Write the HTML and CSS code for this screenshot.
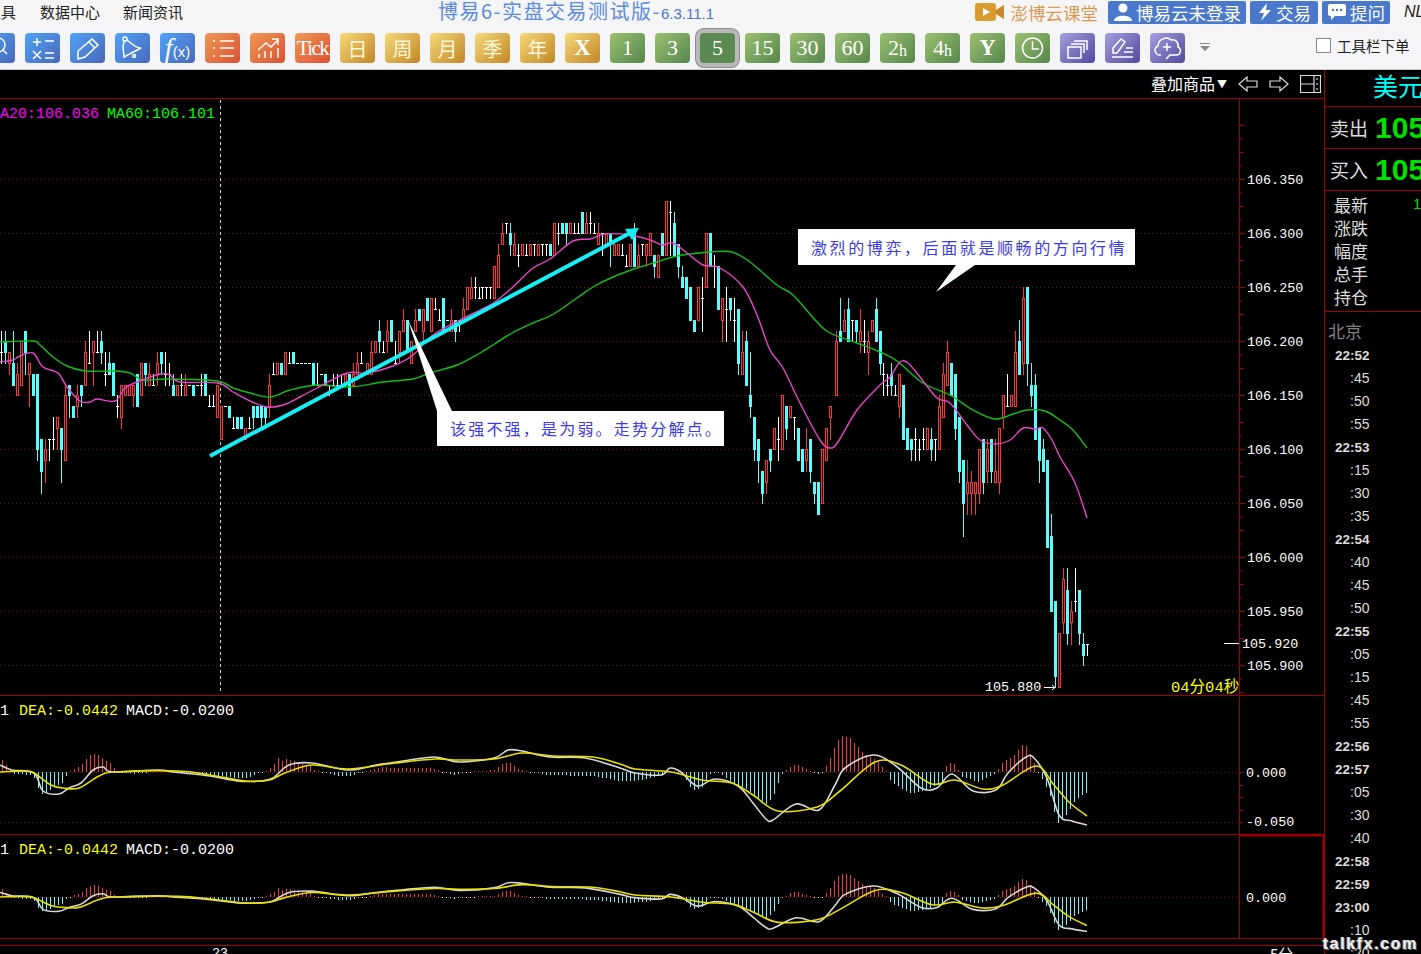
FILE: index.html
```html
<!DOCTYPE html>
<html lang="zh-CN">
<head>
    <meta charset="UTF-8">
    <title>博易6-实盘交易测试版</title>
    <link rel="stylesheet" href="styles.css">
</head>
<body>

<header class="topbar">
    <nav class="menu">
        <span class="menu-cut">工具</span>
        <span>数据中心</span>
        <span>新闻资讯</span>
    </nav>
    <div class="title">博易6-实盘交易测试版-<small>6.3.11.1</small></div>
    <div class="top-right">
        <svg class="video-icon" width="30" height="18" viewBox="0 0 30 18">
            <rect x="0" y="0" width="21" height="18" rx="3" fill="#d99a2e"/>
            <path d="M8 5 L15 9 L8 13 Z" fill="#fff"/>
            <path d="M21 7 L29 2 V16 L21 11 Z" fill="#c9882a"/>
        </svg>
        <span class="course">澎博云课堂</span>
        <a class="top-btn login">
            <svg width="20" height="20" viewBox="0 0 20 20"><circle cx="10" cy="6" r="4.5" fill="#fff"/><path d="M1 19 C1 12 19 12 19 19 Z" fill="#fff"/></svg>
            博易云未登录
        </a>
        <a class="top-btn">
            <svg width="16" height="20" viewBox="0 0 16 20"><path d="M10 1 L2 11 H7 L4 19 L14 8 H9 Z" fill="#fff"/></svg>
            交易
        </a>
        <a class="top-btn">
            <svg width="20" height="20" viewBox="0 0 20 20"><path d="M3 2 H17 Q19 2 19 4 V12 Q19 14 17 14 H8 L4 18 V14 H3 Q1 14 1 12 V4 Q1 2 3 2 Z" fill="#fff"/><circle cx="6" cy="8" r="1.2" fill="#4a79cc"/><circle cx="10" cy="8" r="1.2" fill="#4a79cc"/><circle cx="14" cy="8" r="1.2" fill="#4a79cc"/></svg>
            提问
        </a>
        <span class="nl">NL</span>
    </div>
</header>

<div class="toolbar">
    <div class="tools">
        <a class="tool blue"><svg viewBox="0 0 35 30"><circle cx="18" cy="12" r="7"/><path d="M23 17 L27 21"/></svg></a>
        <a class="tool blue"><svg viewBox="0 0 35 30"><path d="M12 5 V13 M8 9 H16 M20 8 H29 M8 18 L16 26 M16 18 L8 26 M20 20 H29 M20 25 H29"/></svg></a>
        <a class="tool blue"><svg viewBox="0 0 35 30"><path d="M8 26 L8 18 L22 6 L28 12 L15 24 Z M19 9 L25 15"/></svg></a>
        <a class="tool blue"><svg viewBox="0 0 35 30"><circle cx="10" cy="6" r="2"/><path d="M10 8 C6 12 9 18 9 24 L26 15 C20 15 16 10 12 7"/><circle cx="19" cy="23" r="1.5"/></svg></a>
        <a class="tool blue"><span class="fx">f<i>(x)</i></span></a>
        <a class="tool orange"><svg viewBox="0 0 35 30"><path d="M8 8 H10 M15 8 H29 M8 15 H10 M15 15 H29 M8 23 H10 M15 23 H29"/></svg></a>
        <a class="tool orange"><svg viewBox="0 0 35 30"><path d="M8 17 L16 10 L21 14 L28 7 M22 6 H28 V12 M9 21 V25 M15 18 V25 M21 18 V25 M28 15 V25"/></svg></a>
        <a class="tool orange tick">Tick</a>
        <a class="tool gold">日</a>
        <a class="tool gold">周</a>
        <a class="tool gold">月</a>
        <a class="tool gold">季</a>
        <a class="tool gold">年</a>
        <a class="tool gold bold">X</a>
        <a class="tool green">1</a>
        <a class="tool green">3</a>
        <a class="tool green active">5</a>
        <a class="tool green">15</a>
        <a class="tool green">30</a>
        <a class="tool green">60</a>
        <a class="tool green">2<small>h</small></a>
        <a class="tool green">4<small>h</small></a>
        <a class="tool green bold">Y</a>
        <a class="tool green"><svg viewBox="0 0 35 30"><circle cx="17.5" cy="15" r="10"/><path d="M17.5 8 V16 H24"/></svg></a>
        <a class="tool purple"><svg viewBox="0 0 35 30"><rect x="8" y="14" width="13" height="11"/><path d="M11 11 H24 V20 M14 8 H27 V17"/></svg></a>
        <a class="tool purple"><svg viewBox="0 0 35 30"><path d="M8 20 L8 15 L16 6 L20 9 L12 20 Z M7 24 H28 M19 19 H28 M21 15 H28"/></svg></a>
        <a class="tool purple"><svg viewBox="0 0 35 30"><path d="M11 22 C5 23 3 15 8 13 C8 6 17 3 21 7 C26 6 29 10 28 14 C32 16 31 23 25 22 H20 L16 26 M17 10 V18 M13 14 H21"/></svg></a>
    </div>
    <svg class="more" width="10" height="8" viewBox="0 0 10 8"><path d="M0 0 H10 V1 H0 Z M0 3 H10 L5 8 Z" fill="#888"/></svg>
    <label class="order-check"><span class="box"></span>工具栏下单</label>
</div>

<div class="workspace">
    <main class="chart-col">
        <div class="chart-head">
            <span class="overlay">叠加商品<small>▼</small></span>
            <svg width="20" height="18" viewBox="0 0 20 18"><path d="M1 9 L9 2 V6 H19 V12 H9 V16 Z" class="head-icon"/></svg>
            <svg width="20" height="18" viewBox="0 0 20 18"><path d="M19 9 L11 2 V6 H1 V12 H11 V16 Z" class="head-icon"/></svg>
            <svg width="21" height="18" viewBox="0 0 21 18"><path d="M.5 .5 H20.5 V17.5 H.5 Z M.5 9 H14 M14 .5 V17.5" class="head-icon"/><path d="M17 3 V5 M17 8 V10 M17 13 V15" class="head-icon"/></svg>
        </div>

        <svg class="chart" viewBox="0 99 1324 855" width="1324" height="855">
            <g id="grid"></g>
            <path class="dash-line" d="M220.5 100 V694"/>
            <g id="candles" shape-rendering="crispEdges"></g>
            <path id="ma60" class="ma ma60"/>
            <path id="ma20" class="ma ma20"/>
            <g id="macd1"></g>
            <g id="macd2"></g>

            <text class="legend magenta" x="-9" y="118">MA20:106.036</text>
            <text class="legend lime" x="107" y="118">MA60:106.101</text>
            <text class="legend white" x="-9" y="715">.1</text>
            <text class="legend yellow" x="19" y="715">DEA:-0.0442</text>
            <text class="legend white" x="126" y="715">MACD:-0.0200</text>
            <text class="legend white" x="-9" y="854">.1</text>
            <text class="legend yellow" x="19" y="854">DEA:-0.0442</text>
            <text class="legend white" x="126" y="854">MACD:-0.0200</text>

            <g class="axis-text">
                <text x="1247" y="184">106.350</text>
                <text x="1247" y="238">106.300</text>
                <text x="1247" y="292">106.250</text>
                <text x="1247" y="346">106.200</text>
                <text x="1247" y="400">106.150</text>
                <text x="1247" y="454">106.100</text>
                <text x="1247" y="508">106.050</text>
                <text x="1247" y="562">106.000</text>
                <text x="1247" y="616">105.950</text>
                <text x="1247" y="670">105.900</text>
                <text x="1242" y="648">105.920</text>
                <text x="985" y="691">105.880</text>
                <text x="1246" y="777">0.000</text>
                <text x="1246" y="826">-0.050</text>
                <text x="1246" y="902">0.000</text>
                <text x="212" y="957">23</text>
            </g>
            <path class="white-line" d="M1224 643.5 H1239 M1044 687.5 H1055 M1052 685 L1055 687.5 L1052 690"/>
            <text class="countdown" x="1171" y="692">04分04秒</text>
            <text class="time-end" x="1270" y="960">5分</text>

            <path class="cyan-arrow" d="M210 456 L632 232"/>
            <path class="cyan-head" d="M639 228 L625 229 L632 240 Z"/>

            <path class="note-box" d="M437 411 H437 L408 320 L452 411 H724 V446 H437 Z"/>
            <text class="note-text" x="450" y="435">该强不强，是为弱。走势分解点。</text>
            <path class="note-box" d="M798 229 H1135 V265 H975 L936 292 L956 265 H798 Z"/>
            <text class="note-text wide" x="811" y="254">激烈的博弈，后面就是顺畅的方向行情</text>
        </svg>
    </main>

    <aside class="side">
        <div class="side-name">美元</div>
        <div class="side-price"><span>卖出</span><b>105</b></div>
        <div class="side-price"><span>买入</span><b>105</b></div>
        <ul class="side-stats">
            <li>最新<b>1</b></li>
            <li>涨跌</li>
            <li>幅度</li>
            <li>总手</li>
            <li>持仓</li>
        </ul>
        <div class="side-city">北京</div>
        <ul class="side-times">
            <li class="hour">22:52</li>
            <li>:45</li>
            <li>:50</li>
            <li>:55</li>
            <li class="hour">22:53</li>
            <li>:15</li>
            <li>:30</li>
            <li>:35</li>
            <li class="hour">22:54</li>
            <li>:40</li>
            <li>:45</li>
            <li>:50</li>
            <li class="hour">22:55</li>
            <li>:05</li>
            <li>:15</li>
            <li>:45</li>
            <li>:55</li>
            <li class="hour">22:56</li>
            <li class="hour">22:57</li>
            <li>:05</li>
            <li>:30</li>
            <li>:40</li>
            <li class="hour">22:58</li>
            <li class="hour">22:59</li>
            <li class="hour">23:00</li>
            <li>:10</li>
            <li>:20</li>
        </ul>
    </aside>
    <div class="watermark">talkfx.com</div>
</div>

<script src="chart.js"></script>
</body>
</html>
```

FILE: styles.css
```css
html, body {
    margin: 0;
    padding: 0;
}
body {
    width: 1421px;
    height: 954px;
    overflow: hidden;
    background-color: #000;
    font-family: "Noto Sans CJK SC", "Liberation Sans", sans-serif;
    color: #fff;
}
ul {
    list-style: none;
    margin: 0;
    padding: 0;
}

/* top strip */
.topbar {
    height: 24px;
    display: flex;
    align-items: center;
    background-color: #f5f5f5;
    color: #222;
    overflow: hidden;
}
.menu {
    width: 438px;
    flex: none;
    display: flex;
    gap: 23px;
    font-size: 15px;
    line-height: 24px;
}
.menu-cut {
    margin-left: -14px;
    margin-right: 1px;
}
.title {
    font-size: 20px;
    line-height: 24px;
    letter-spacing: 1.5px;
    color: #5c8be0;
    white-space: nowrap;
}
.title small {
    font-size: 15px;
    letter-spacing: 0;
    color: #4a74d8;
    font-family: "Liberation Sans", sans-serif;
}
.top-right {
    margin-left: auto;
    display: flex;
    align-items: center;
    gap: 4px;
}
.video-icon {
    margin-right: 2px;
}
.course {
    font-size: 17.5px;
    color: #d79a55;
    margin-right: 6px;
    white-space: nowrap;
}
.top-btn {
    width: 68px;
    height: 23px;
    flex: none;
    display: flex;
    align-items: center;
    justify-content: center;
    gap: 3px;
    background-color: #4a79cc;
    border-radius: 2px;
    color: #fff;
    font-size: 17.5px;
    white-space: nowrap;
}
.top-btn.login {
    width: 138px;
}
.nl {
    margin-left: 10px;
    width: 17px;
    overflow: hidden;
    font-family: "Liberation Sans", sans-serif;
    font-style: italic;
    font-size: 16px;
}

/* toolbar */
.toolbar {
    height: 45px;
    display: flex;
    align-items: flex-start;
    background-color: #f5f5f8;
    border-bottom: 1px solid #c8c8c8;
    overflow: hidden;
}
.tools {
    margin-left: -20px;
    padding-top: 9px;
    display: flex;
    gap: 10px;
}
.tool {
    width: 35px;
    height: 30px;
    display: flex;
    align-items: center;
    justify-content: center;
    border-radius: 4px;
    color: #fff;
    font-family: "Liberation Serif", "Noto Sans CJK SC", serif;
    font-size: 22px;
}
.tool svg {
    width: 35px;
    height: 30px;
    fill: none;
    stroke: #fff;
    stroke-width: 1.5;
}
.tool small {
    font-size: 16px;
    margin-top: 5px;
}
.tool.bold {
    font-weight: bold;
    font-size: 23px;
}
.tool.tick {
    font-size: 21px;
    letter-spacing: -1.5px;
}
.blue {
    background: linear-gradient(135deg, #4fa3f5, #4a68bc);
}
.orange {
    background: linear-gradient(135deg, #ee9a55, #dd4f33);
}
.gold {
    background: linear-gradient(135deg, #f6da78, #c28626);
}
.gold:not(.bold) {
    font-family: "Noto Sans CJK SC", sans-serif;
    font-size: 20px;
    color: #fff6dc;
}
.green {
    background: linear-gradient(135deg, #9cc070, #54874c);
}
.purple {
    background: linear-gradient(135deg, #a69ede, #524a9e);
}
.tool.active {
    background: #5a8a52;
    box-shadow: 0 0 0 4px #b8b8b8, 0 0 0 5px #8c8c8c;
}
.fx {
    font-size: 28px;
    font-style: italic;
}
.fx i {
    font-size: 15px;
    font-style: normal;
    font-family: "Liberation Sans", sans-serif;
}
.more {
    margin: 19px 0 0 15px;
}
.order-check {
    margin: 11px 0 0 106px;
    display: flex;
    align-items: center;
    gap: 6px;
    font-size: 14.5px;
    color: #222;
    white-space: nowrap;
}
.box {
    width: 13px;
    height: 13px;
    border: 1px solid #888;
    background-color: #fff;
}

/* main area */
.workspace {
    position: relative;
    height: 884px;
    display: flex;
    overflow: hidden;
}
.chart-col {
    width: 1324px;
    flex: none;
    border-right: 1px solid #a00000;
}
.chart-head {
    height: 28px;
    display: flex;
    align-items: center;
    justify-content: flex-end;
    gap: 11px;
    padding-right: 3px;
    border-bottom: 1px solid #a00000;
}
.overlay {
    font-size: 16px;
    line-height: 26px;
    margin-bottom: 2px;
    white-space: nowrap;
}
.overlay small {
    font-size: 10px;
    margin-left: 2px;
    vertical-align: 2px;
}
.head-icon {
    fill: none;
    stroke: #ddd;
    stroke-width: 1.2;
}
.chart {
    display: block;
    background-color: #000;
}
.chart text {
    white-space: pre;
}
.legend {
    font-family: "Liberation Mono", monospace;
    font-size: 15px;
}
.magenta {
    fill: #ff00ff;
}
.lime {
    fill: #00ff00;
}
.white {
    fill: #fff;
}
.yellow {
    fill: #ffff00;
}
.axis-text text {
    font-family: "Liberation Mono", monospace;
    font-size: 13.4px;
    fill: #fff;
}
.countdown {
    font-family: "Liberation Mono", "Noto Sans CJK SC", monospace;
    font-size: 15.5px;
    fill: #ffff00;
}
.time-end {
    font-size: 15px;
    fill: #fff;
}
.dash-line {
    stroke: #d0d0d0;
    stroke-width: 1;
    stroke-dasharray: 3 3;
}
.white-line {
    stroke: #fff;
    stroke-width: 1;
    fill: none;
}
.ma {
    fill: none;
    stroke-width: 1.4;
}
.ma20 {
    stroke: #ea44c8;
}
.ma60 {
    stroke: #10c010;
}
.cyan-arrow {
    stroke: #14f0f5;
    stroke-width: 4;
}
.cyan-head {
    fill: #14f0f5;
}
.note-box {
    fill: #fff;
}
.note-text {
    font-size: 16px;
    letter-spacing: 2.2px;
    fill: #3a3af0;
}
.note-text.wide {
    letter-spacing: 2.6px;
}

/* right panel */
.side {
    flex: 1;
    overflow: hidden;
    min-width: 0;
}
.side-name {
    height: 36px;
    padding-left: 48px;
    font-size: 25px;
    line-height: 30px;
    color: #00ffff;
    white-space: nowrap;
    border-bottom: 1px solid #a00000;
}
.side-price {
    height: 41px;
    display: flex;
    align-items: center;
    gap: 7px;
    padding-left: 5px;
    border-bottom: 1px solid #a00000;
    font-size: 19px;
    color: #ddd;
    white-space: nowrap;
}
.side-price b {
    font-family: "Liberation Sans", sans-serif;
    font-size: 30px;
    color: #00e000;
    margin-top: 1px;
}
.side-stats {
    height: 121px;
    padding-top: 2px;
    box-sizing: border-box;
    border-bottom: 1px solid #a00000;
}
.side-stats li {
    height: 23px;
    padding-left: 9px;
    display: flex;
    justify-content: space-between;
    font-size: 17px;
    line-height: 23px;
    color: #ddd;
}
.side-stats b {
    font-family: "Liberation Sans", sans-serif;
    font-weight: normal;
    font-size: 14px;
    color: #00e000;
}
.side-city {
    height: 32px;
    padding-left: 3px;
    font-size: 17px;
    line-height: 38px;
    color: #808080;
}
.side-times {
    font-family: "Liberation Sans", sans-serif;
    font-size: 14px;
    line-height: 23px;
    color: #ddd;
    padding-left: 25px;
}
.side-times li.hour {
    margin-left: -15px;
    font-weight: bold;
    font-size: 13.5px;
}
.watermark {
    position: absolute;
    right: 3px;
    bottom: 0;
    font-family: "Liberation Sans", sans-serif;
    font-weight: bold;
    font-size: 16px;
    line-height: 20px;
    letter-spacing: 1.6px;
    color: #eee;
    text-shadow: 1px 1px 0 #777, -1px 0 0 #777;
}
```

FILE: chart.js
```js
// grid, candles, moving averages and MACD panels of the chart
var RED = "#ff3333", CYAN = "#55ffff", WHITE = "#ffffff", AXIS = "#a00000";

function levelY(l) {
    return Math.round(179.3 + 10.8 * l);
}

// one string per run of bars: x of first bar, then "type hi,top,bottom,low"
// levels are steps of 0.01 below 106.35; w = doji as "w hi,tick,low"
var runs = [
    [1.33, "w14,16,17 c14,15,16,17 r16,16,17,18 c14,17,19,19 r17,18,20,20 r15,15,19,19 c14,14,16,18 r17,17,18,21 c18,18,20,20 c18,18,25,26 c24,24,27,29 r24,25,26,28 w24,24,26 w22,24,25 r22,22,23,25 c23,23,25,28 r19,20,26,26 c19,19,20,22 c21,21,22,22 r19,20,21,22 c19,19,20,21 r15,16,19,19 w14,17,17 r15,15,16,19 w14,16,16 c14,15,16,17 w16,18,19 c16,17,18,18 c17,17,20,20 w20,21,22 r19,19,22,23 r19,19,20,20 r19,19,20,20 r19,19,20,21 c18,18,21,21 r17,17,20,20 c17,17,18,19 r17,18,19,19 w18,19,19 r16,17,18,19 c16,16,17,18 w16,18,19 w17,18,19 c18,19,20,20 r19,19,20,20 w18,19,20 r18,19,20,20 w19,19,19 c19,19,20,20 w19,19,19 w18,19,20 c18,18,20,20 w20,21,21 w20,21,21 r19,19,22,22 r21,21,24,24 w21,21,21 c21,21,22,22 w22,23,23 c22,22,23,23 c22,22,23,23 r23,23,24,24 w22,23,23 c21,21,22,23 c21,21,22,22 c21,21,22,23 c21,21,22,23 r18,19,21,22 w17,18,18 r17,17,18,18 c17,17,18,18 r16,16,18,18 w16,17,17 c16,16,17,17 w17,17,17 w17,17,17 w17,17,17 w17,17,17 c17,17,19,19 w17,19,19 w18,18,18 c18,18,19,19 w19,19,20 w18,19,19 w18,19,19 w18,19,19 r18,18,19,19 c18,18,20,20 r17,18,19,19 r16,17,18,18 w16,17,17"],
    [366.67, "r17,17,18,18 r15,16,18,18 r15,15,16,16 c13,14,15,16 w15,16,16 r13,14,15,16 c13,13,15,15 w15,17,17 r14,14,16,17 r12,13,14,14 c13,13,16,16 r15,15,17,17 r12,13,14,14 c12,12,13,13 r12,12,14,15 c11,11,13,13 r11,11,14,14 w11,12,12 w12,13,13 c11,11,14,14 w13,13,13 r12,13,14,14 c13,13,14,15 w13,13,14 r11,12,13,13 r10,10,12,12 r9,10,11,11 w9,10,11 w10,11,11"],
    [482.33, "w10,10,11 w10,10,11 w10,10,11 r8,8,11,11 r6,7,10,10 r4,5,6,6 w4,4,5 c4,5,6,7 r5,6,7,7 w6,7,8 r6,6,7,7 w6,7,7 r6,6,7,7 w6,6,7 r6,6,7,7 w6,6,7 w6,6,7 c6,6,7,7 r4,4,7,7 w4,5,6 c4,4,5,5 c4,4,5,6 r4,4,5,5 w4,5,5 w4,5,5 c3,3,5,5 r3,4,5,5 w3,4,5 w4,5,5 r4,5,6,6 w5,5,7 r5,5,6,6 c5,5,6,8 r6,6,7,7 r6,6,7,7 w6,7,7 w7,8,8 r6,6,8,8 c4,5,8,8 r6,7,8,8 w6,6,7 r6,6,7,8 r5,5,7,7 c7,7,8,9 r7,7,9,9 c5,5,7,7 r2,2,7,7 w2,3,7 c3,4,7,7 c6,6,8,9 c8,9,10,10 c9,9,11,11 c10,10,13,13 c13,13,14,14 r10,10,13,13 w9,11,14 r5,5,10,10 c5,5,8,8 w7,8,10 c8,8,12,12 r11,11,13,15 w10,12,15 c11,11,12,13 w11,13,15 c12,12,17,18 r14,16,18,18 c14,15,19,19 c16,20,21,22 c22,22,25,26 c24,24,26,28 c27,27,29,30 r26,26,28,29 c25,25,26,27 r23,23,25,25 w22,24,26 r20,20,25,25 c21,21,23,24 r21,21,22,22 w22,22,24 c23,23,26,26 c25,25,27,27 r23,25,26,27 c24,24,27,28 c28,28,29,30 c28,28,31,31 r25,25,30,30 r23,23,26,26 r21,21,22,24"],
    [835.67, "r14,15,20,20 c11,14,15,15 r12,13,14,14 c11,12,15,15 w13,13,15 c13,13,14,15 r12,14,15,16 w13,15,16 r14,15,16,18 r13,13,14,14 c11,12,15,15 c14,14,17,18"],
    [883.33, "w17,18,20 w18,19,20 c17,18,19,20 w19,20,20 r18,18,21,22 c19,19,24,24 c23,23,25,25 c24,24,25,26 w23,24,26 w24,25,26 w23,24,25 r23,23,25,25 c23,24,25,26 w24,24,26 r20,21,25,25 r17,18,22,22 r15,16,19,19 c17,17,20,20 c18,18,23,24 c22,22,27,28 c26,26,30,33 r26,28,29,31 r27,28,29,31 r28,28,29,31 r25,25,29,30 c24,24,28,29 r24,25,27,28 c24,24,27,28 r24,27,28,28 r23,23,28,29 r20,20,22,23 w18,21,21 r20,20,21,21 r14,16,21,21 c13,15,18,18 r10,11,17,18 c10,10,17,19 c17,19,20,21 c18,19,24,24 c23,23,26,28 c24,25,27,27 c26,26,34,34 c31,33,40,40 c39,39,46,47 r42,42,47,47 r36,37,41,42 c36,38,42,43 r39,40,41,43 w36,39,40 c38,38,42,43 c42,43,44,45 w43,43,44"]
];

function rect(x, y, w, h, color) {
    return '<rect x="' + x + '" y="' + y + '" width="' + w + '" height="' + h + '" fill="' + color + '"/>';
}

function drawCandle(x, s) {
    var type = s[0];
    var v = s.slice(1).split(",").map(function (n) { return levelY(+n); });
    if (type == "w") {
        return rect(x, v[0], 1, v[2] - v[0] + 1, WHITE) + rect(x - 1, v[1], 3, 1, WHITE);
    }
    var color = type == "r" ? RED : CYAN;
    var out = rect(x, v[0], 1, v[3] - v[0] + 1, color);
    if (type == "c") {
        return out + rect(x - 1, v[1], 3, v[2] - v[1] + 1, color);
    }
    out += rect(x - 1, v[1], 3, v[2] - v[1] + 1, RED);
    return out + rect(x, v[1] + 1, 1, Math.max(v[2] - v[1] - 1, 0), "#000");
}

var candleHtml = "";
runs.forEach(function (run) {
    run[1].split(" ").forEach(function (s, i) {
        candleHtml += drawCandle(Math.round(run[0] + i * 4), s);
    });
});
document.getElementById("candles").innerHTML = candleHtml;

// dotted levels and axes
var grid = "";
function dotted(y) {
    grid += '<path d="M0 ' + (y + 0.5) + ' H1239" stroke="#7a1010" stroke-dasharray="1 3"/>';
}
for (var k = 0; k < 10; k++) {
    dotted(179 + 54 * k);
}
dotted(772);
dotted(822);
dotted(897);
function axisLine(d, w) {
    grid += '<path d="' + d + '" stroke="' + AXIS + '" stroke-width="' + (w || 1) + '" fill="none"/>';
}
axisLine("M1239.5 99 V938");
axisLine("M0 695.5 H1324");
axisLine("M0 834.5 H1324");
axisLine("M0 938.5 H1324");
axisLine("M0 945.5 H1324");
axisLine("M1240.5 835.5 H1323.5 V938", 2);
for (var t = 0; t < 44; t++) {
    var ty = 179.5 + 13.5 * (t - 4);
    if (ty > 125 && ty < 694) {
        axisLine("M1239 " + ty + " H" + (t % 4 == 0 ? 1245 : t % 2 ? 1242 : 1244));
    }
}
[772, 822, 785, 797, 810].forEach(function (y) {
    axisLine("M1239 " + (y + 0.5) + " H1243");
});
document.getElementById("grid").innerHTML = grid;

// catmull-rom through the points, the lines are smooth averages
function smoothPath(points) {
    var d = "M" + points[0][0] + " " + points[0][1];
    for (var i = 0; i < points.length - 1; i++) {
        var p0 = points[i - 1] || points[i], p1 = points[i], p2 = points[i + 1], p3 = points[i + 2] || p2;
        d += " C" + (p1[0] + (p2[0] - p0[0]) / 6) + " " + (p1[1] + (p2[1] - p0[1]) / 6) + " " +
            (p2[0] - (p3[0] - p1[0]) / 6) + " " + (p2[1] - (p3[1] - p1[1]) / 6) + " " + p2[0] + " " + p2[1];
    }
    return d;
}

document.getElementById("ma60").setAttribute("d", smoothPath([
    [0,342],[33,341],[40,345],[53,357],[67,366],[85,371],[113,371],[130,373],[143,380],[167,379],[217,381],[233,388],[250,393],[270,397],[290,390],[317,385],[350,387],[383,382],[413,379],[430,373],[457,365],[480,353],[493,345],[512,333],[533,323],[552,315],[577,298],[593,287],[613,277],[637,268],[657,262],[677,256],[710,252],[732,252],[750,262],[777,285],[793,295],[817,322],[830,333],[857,343],[880,352],[897,361],[923,383],[950,395],[973,410],[995,419],[1013,414],[1027,410],[1045,411],[1060,420],[1073,430],[1087,448]
]));
document.getElementById("ma20").setAttribute("d", smoothPath([
    [0,362],[13,360],[20,356],[33,353],[43,367],[58,373],[67,387],[80,401],[90,402],[97,399],[115,401],[125,388],[137,382],[160,374],[170,375],[180,382],[218,383],[233,392],[250,401],[267,407],[283,405],[300,397],[317,388],[347,373],[367,373],[393,366],[413,355],[433,335],[460,320],[480,310],[495,302],[513,287],[533,268],[550,259],[573,241],[590,239],[605,234],[630,235],[650,240],[662,245],[673,243],[687,253],[703,265],[720,268],[743,287],[757,315],[770,350],[783,368],[800,403],[820,440],[830,448],[838,442],[857,410],[880,385],[890,377],[900,362],[908,363],[920,377],[937,398],[950,403],[967,425],[980,440],[995,444],[1010,440],[1023,428],[1035,429],[1043,428],[1052,440],[1060,457],[1075,483],[1087,518]
]));

// MACD key points: x, px above zero on the upper panel
var hist = [[2,12],[8,4],[12,0],[14,-2],[33,-3],[37,-15],[42,-22],[47,-20],[51,-18],[57,-13],[61,-13],[65,-5],[69,0],[77,4],[81,6],[85,12],[89,17],[94,18],[99,17],[104,12],[109,10],[113,5],[117,0],[130,0],[134,-2],[150,1],[158,2],[190,-1],[210,-3],[237,-6],[249,-6],[257,-1],[266,1],[270,4],[274,8],[278,14],[282,11],[286,13],[290,12],[294,11],[298,10],[302,8],[306,7],[310,6],[314,2],[320,0],[336,-4],[352,-4],[356,-2],[372,2],[380,5],[395,4],[431,4],[443,0],[455,-3],[467,0],[494,2],[502,8],[508,10],[518,3],[530,0],[546,-3],[593,-4],[620,-9],[635,-9],[651,-6],[663,-3],[671,2],[679,-1],[684,-5],[692,-18],[697,-18],[702,-15],[712,1],[722,-3],[735,-12],[748,-18],[766,-32],[773,-25],[781,-3],[789,5],[796,8],[806,3],[819,-2],[823,1],[827,8],[831,16],[835,27],[839,34],[843,36],[847,35],[851,34],[855,27],[859,24],[863,18],[867,16],[875,13],[886,1],[891,-10],[911,-22],[927,-18],[942,-10],[947,10],[955,8],[962,-5],[978,-10],[995,-2],[1003,10],[1013,16],[1024,30],[1031,16],[1039,-2],[1049,-20],[1057,-52],[1067,-42],[1075,-28],[1087,-20]];
var dif = [[0,7],[12,2],[34,-1],[43,-19],[59,-22],[69,-16],[81,-11],[93,2],[103,5],[113,0],[158,2],[174,0],[210,-4],[237,-9],[261,-9],[273,-6],[289,7],[312,9],[348,2],[376,7],[403,11],[435,15],[459,10],[494,14],[508,22],[522,21],[550,15],[585,14],[620,4],[635,-1],[661,-3],[670,4],[681,0],[697,-14],[715,-7],[738,-14],[753,-31],[766,-47],[773,-48],[796,-32],[819,-38],[835,-13],[845,4],[873,17],[896,6],[921,-16],[937,-16],[952,-2],[973,-19],[996,-18],[1008,-1],[1026,15],[1034,14],[1047,-6],[1059,-43],[1072,-49],[1087,-53]];
var dea = [[0,0],[24,1],[34,-1],[51,-13],[63,-16],[79,-16],[99,-4],[115,0],[178,1],[210,-3],[245,-9],[269,-8],[285,-1],[312,7],[348,3],[395,9],[435,13],[459,12],[494,13],[522,19],[554,16],[593,15],[620,8],[635,3],[671,0],[702,-8],[732,-11],[753,-23],[778,-39],[817,-35],[840,-19],[875,10],[901,7],[932,-12],[955,-8],[983,-17],[1003,-13],[1036,6],[1054,-13],[1070,-31],[1087,-44]];

function valueAt(points, x) {
    for (var i = 1; i < points.length; i++) {
        if (x <= points[i][0]) {
            var a = points[i - 1], b = points[i];
            return a[1] + (b[1] - a[1]) * (x - a[0]) / (b[0] - a[0]);
        }
    }
    return points[points.length - 1][1];
}

function drawMacd(id, zero, scale) {
    var out = "";
    for (var i = 0; i < 272; i++) {
        var x = Math.round(2 + i * 4.0012);
        var v = Math.round(valueAt(hist, x) * scale);
        if (v == 0) {
            out += rect(x, zero, 1, 1, WHITE);
        } else if (v > 0) {
            out += rect(x, zero - v, 1, v, RED);
        } else {
            out += rect(x, zero, 1, -v, CYAN);
        }
    }
    function curve(points, color) {
        var p = points.map(function (q) { return [q[0], zero - q[1] * scale]; });
        return '<path d="' + smoothPath(p) + '" fill="none" stroke="' + color + '" stroke-width="1.6"/>';
    }
    out += curve(dif, "#d8d8d8") + curve(dea, "#e8e000");
    document.getElementById(id).innerHTML = out;
}
drawMacd("macd1", 772, 1);
drawMacd("macd2", 897, 0.65);
```
